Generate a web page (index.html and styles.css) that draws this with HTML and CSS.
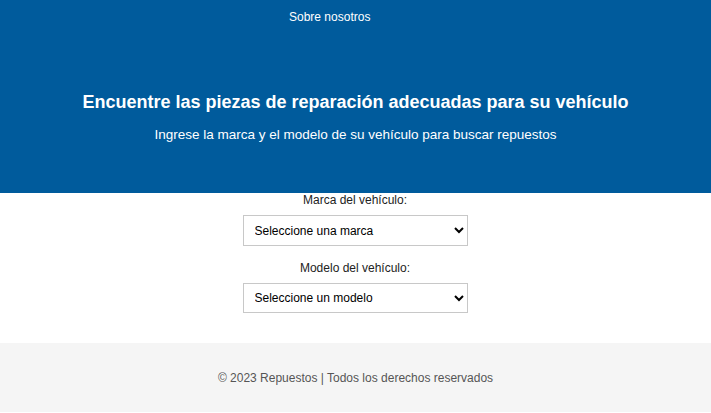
FILE: index.html
```html
<!DOCTYPE html>
<html lang="es">
<head>
<meta charset="utf-8">
<title>Repuestos</title>
<link rel="stylesheet" href="styles.css">
</head>
<body>
<header class="header">
  <nav class="nav"><a href="#" class="nav-link">Sobre nosotros</a></nav>
  <div class="hero">
    <h1 class="hero-title">Encuentre las piezas de reparación adecuadas para su vehículo</h1>
    <p class="hero-sub">Ingrese la marca y el modelo de su vehículo para buscar repuestos</p>
  </div>
</header>
<main class="form">
  <label class="field-label" for="marca">Marca del vehículo:</label>
  <select id="marca" class="field-select"><option>Seleccione una marca</option></select>
  <label class="field-label second" for="modelo">Modelo del vehículo:</label>
  <select id="modelo" class="field-select"><option>Seleccione un modelo</option></select>
</main>
<footer class="footer">© 2023 Repuestos | Todos los derechos reservados</footer>
</body>
</html>
```
FILE: styles.css
```css
* { box-sizing: border-box; }
html, body { margin: 0; padding: 0; }
body {
  font-family: "Liberation Sans", Arial, sans-serif;
  background: #fff;
  color: #222;
}
.header {
  background: #005b9c;
  color: #fff;
  height: 193px;
  display: flex;
  flex-direction: column;
}
.nav {
  height: 34px;
  display: flex;
  align-items: center;
  padding-left: 289px;
}
.nav-link {
  color: #fff;
  text-decoration: none;
  font-size: 12px;
}
.hero {
  text-align: center;
  padding-top: 57px;
}
.hero-title {
  margin: 0;
  font-size: 18px;
  line-height: 22px;
  font-weight: bold;
}
.hero-sub {
  margin: 13px 0 0;
  font-size: 13.5px;
  line-height: 17px;
}
.form {
  display: flex;
  flex-direction: column;
  align-items: center;
  padding-right: 1px;
  padding-bottom: 30px;
}
.field-label {
  font-size: 12px;
  line-height: 14px;
  color: #222;
  margin-bottom: 8px;
}
.field-label.second { margin-top: 15px; }
.field-select {
  width: 225px;
  height: 31px;
  font-family: "Liberation Sans", Arial, sans-serif;
  font-size: 12px;
  color: #000;
  background: #fff;
  border: 1px solid #c8c8c8;
  border-radius: 0;
  padding: 0 6px 0 7px;
}
.field-select + .field-label.second + .field-select { height: 30px; }
.footer {
  background: #f5f5f5;
  height: 69px;
  display: flex;
  align-items: center;
  justify-content: center;
  font-size: 12px;
  color: #555;
}
```
